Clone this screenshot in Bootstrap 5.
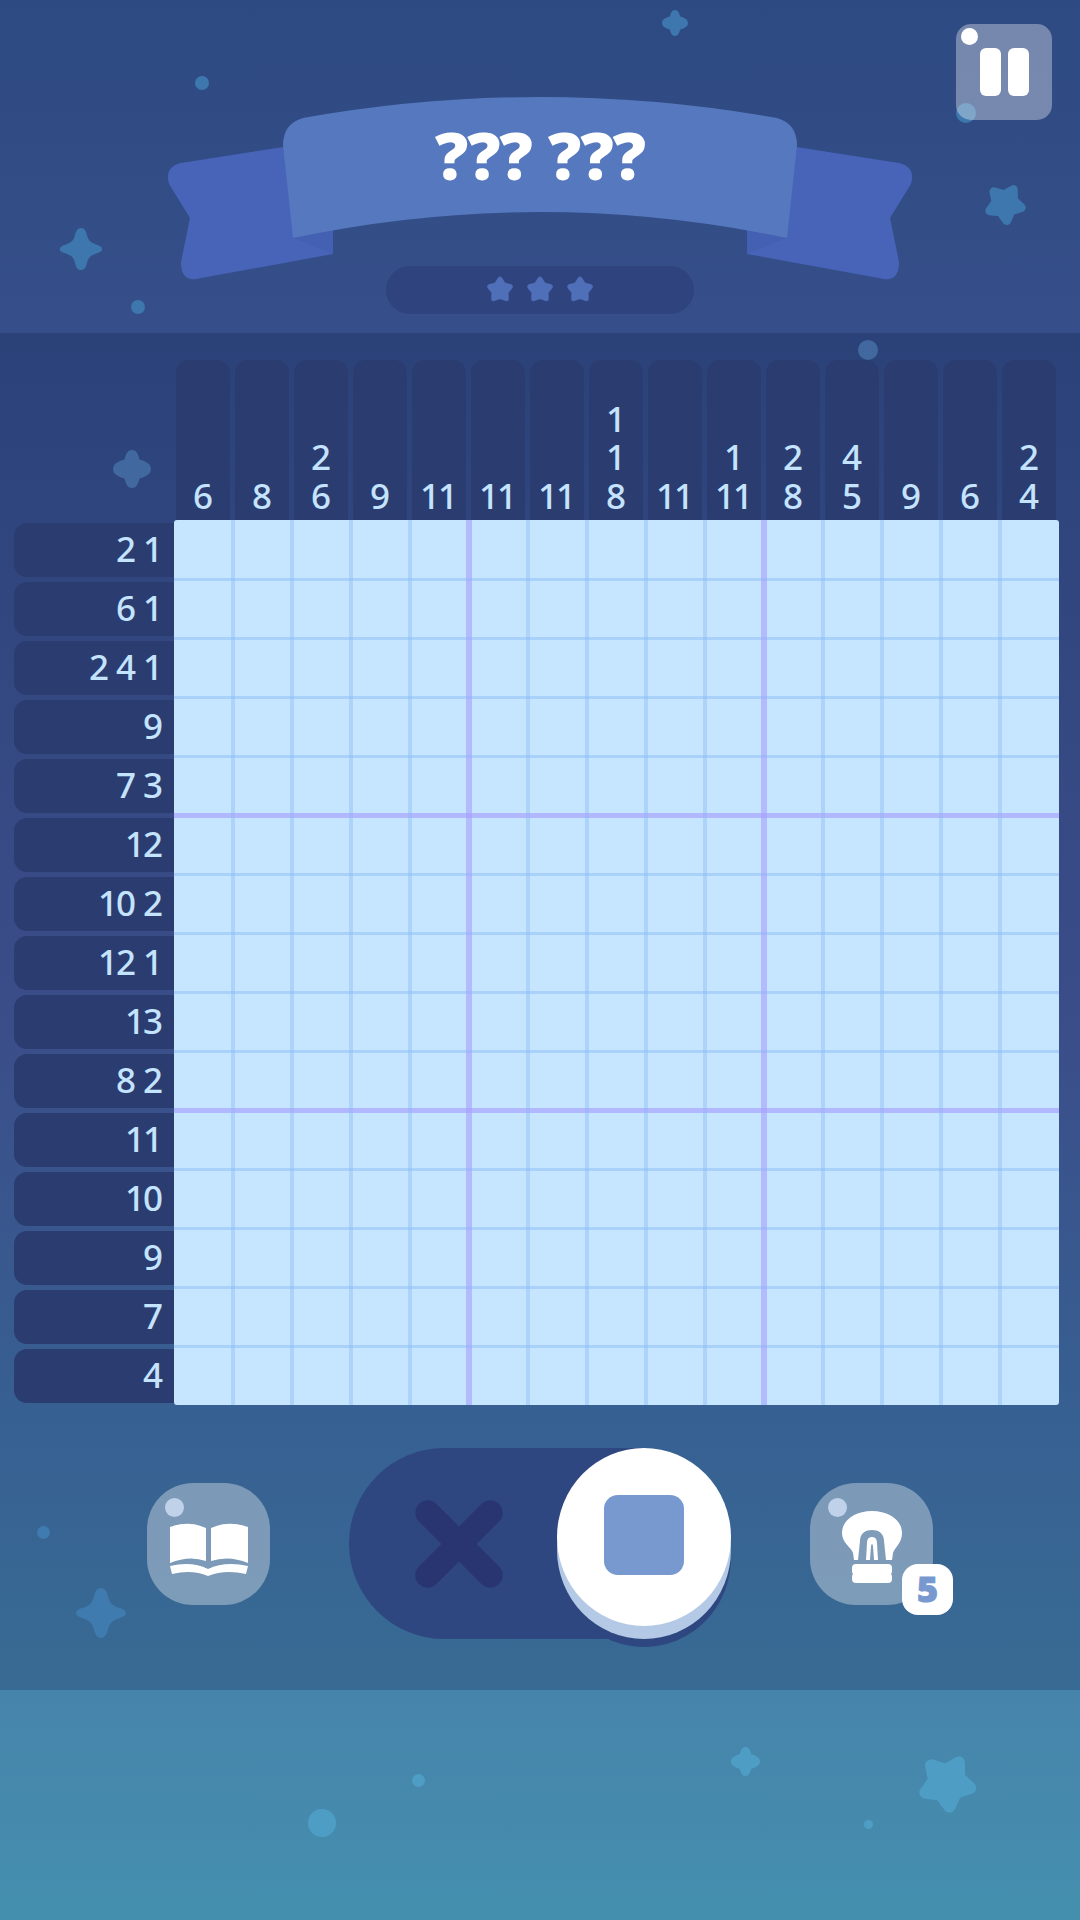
<!DOCTYPE html>
<html lang="en">
<head>
  <meta charset="UTF-8" />
  <meta name="viewport" content="width=device-width, initial-scale=1.0" />
  <title>Nonogram</title>
  <link href="https://cdn.jsdelivr.net/npm/bootstrap@5.3.0/dist/css/bootstrap.min.css" rel="stylesheet">
  <style>
    body {
      font-family: "Noto Sans", sans-serif;
      background: #2e4a82;
      width: 1080px;
      height: 1920px;
      overflow: hidden;
    }
    .deco { position: absolute; display: block; }
    .layer { position: relative; z-index: 1; }

    .top-band {
      height: 333px;
      padding-top: 90px;
      background: linear-gradient(180deg, #2e4a82 0%, #364f8a 100%);
    }
    .pause-btn {
      top: 24px;
      right: 28px;
      width: 96px;
      height: 96px;
      gap: 7px;
      border-radius: 15px;
      background: rgba(255,255,255,.34);
      z-index: 2;
    }
    .pause-btn .shine { top: 4px; left: 5px; width: 17px; height: 17px; background: #fff; }
    .pause-bar { width: 21px; height: 48px; border-radius: 6px; background: #fff; }
    .ribbon { width: 760px; height: 176px; }
    .ribbon svg { position: absolute; left: 0; top: 0; }
    .ribbon-title {
      top: 29px;
      font-size: 66px;
      line-height: 70px;
      font-weight: 900;
      color: #fff;
      letter-spacing: -1px;
    }
    .stars-pill { width: 308px; height: 48px; gap: 8px; background: #2f437f; }

    .play-area {
      height: 1357px;
      background: linear-gradient(180deg, #2b4279 0%, #3b4d89 50%, #376092 80%, #386b94 100%);
    }
    .board {
      display: grid;
      grid-template-columns: 174px 885px;
      grid-template-rows: 160px 885px;
      padding-top: 27px;
      height: 1072px;
    }
    .col-clues { display: grid; grid-template-columns: repeat(15, 59px); }
    .col-clue {
      width: 54px;
      margin-left: 2px;
      padding-bottom: 5px;
      padding-right: 2px;
      border-radius: 13px 13px 0 0;
      background: #2b3c70;
      color: #c4e3fd;
      font-size: 35px;
      line-height: 38.5px;
      font-weight: 500;
      letter-spacing: -2px;
    }
    .row-clues { display: grid; grid-template-rows: repeat(15, 59px); }
    .row-clue {
      height: 54px;
      margin: 3px 0 0 14px;
      padding-right: 13px;
      padding-bottom: 4px;
      gap: 9px;
      border-radius: 13px 0 0 13px;
      background: #2b3c70;
      color: #c4e3fd;
      font-size: 35px;
      line-height: 1;
      font-weight: 500;
      letter-spacing: -2px;
    }
    .puzzle {
      display: grid;
      grid-template-columns: repeat(15, 59px);
      grid-template-rows: repeat(15, 59px);
      background: #c6e5ff;
      border-radius: 3px;
    }
    .cell { position: relative; }
    .cell::before, .cell::after { content: ""; position: absolute; }
    .cell::before { top: 0; bottom: 0; right: -2px; width: 4px; background: rgba(135,184,242,.4); }
    .cell::after { left: 0; right: 0; bottom: -2px; height: 3px; background: rgba(135,184,242,.45); }
    .cell.thick-v::before { right: -3px; width: 6px; background: rgba(166,159,255,.6); }
    .cell.thick-h::after { bottom: -3px; height: 5px; background: rgba(166,159,255,.65); }
    .cell.last-col::before, .cell.last-row::after { display: none; }

    .controls { gap: 79px; padding-top: 43px; }
    .round-btn {
      width: 123px;
      height: 122px;
      border-radius: 46px;
      background: rgba(255,255,255,.35);
    }
    .shine { position: absolute; border-radius: 50%; }
    .round-btn .shine { top: 15px; left: 18px; width: 19px; height: 19px; background: #c0d2ea; }
    .hint-count {
      right: -20px;
      bottom: -10px;
      width: 51px;
      height: 51px;
      border-radius: 16px;
      background: #fff;
      color: #7799d0;
      font-size: 36px;
      line-height: 1;
      font-weight: 900;
      -webkit-text-stroke: 1px #7799d0;
    }
    .mode-track { width: 382px; height: 191px; background: #2e4780; }
    .mode-track svg { margin-left: 64px; }
    .mode-knob {
      top: 0;
      right: 0;
      width: 174px;
      height: 178px;
      border-radius: 50%;
      background: #fff;
      box-shadow: 0 13px 0 #b4c9e5, 0 21px 0 #2e4780;
    }
    .fill-square { width: 80px; height: 80px; border-radius: 14px; background: #7799d0; margin-top: -4px; }

    .bottom-band {
      height: 230px;
      background: linear-gradient(180deg, #4784ac 0%, #448fae 100%);
    }
  </style>
</head>
<body>
<svg width="0" height="0" class="position-absolute">
  <symbol id="spark" viewBox="0 0 100 100">
    <path d="M50 2C58 2 62 10 64 20C67 31 72 36 88 41C96 44 98 47 98 50C98 54 96 56 88 59C72 64 67 69 64 80C62 90 58 98 50 98C42 98 38 90 36 80C33 69 28 64 12 59C4 56 2 54 2 50C2 47 4 44 12 41C28 36 33 31 36 20C38 10 42 2 50 2Z"/>
  </symbol>
  <symbol id="spark-fat" viewBox="0 0 100 100">
    <path d="M50 0C63 0 66 12 70 25C80 28 100 34 100 50C100 66 80 72 70 75C66 88 63 100 50 100C37 100 34 88 30 75C20 72 0 66 0 50C0 34 20 28 30 25C34 12 37 0 50 0Z"/>
  </symbol>
  <symbol id="star" viewBox="0 0 100 100">
    <polygon points="50,16 61.8,33.8 82.3,39.5 69,56.2 70,77.5 50,70 30,77.5 31,56.2 17.7,39.5 38.2,33.8" stroke-width="15" stroke-linejoin="round"/>
  </symbol>
  <symbol id="star-tilt" viewBox="0 0 100 100">
    <polygon transform="rotate(30 50 50)" points="50,12 62.3,33 86.1,38.3 70,56.5 72.3,80.7 50,71 27.7,80.7 30,56.5 13.9,38.3 37.7,33" stroke-width="20" stroke-linejoin="round"/>
  </symbol>
</svg>

<header id="top-band" class="top-band position-relative d-flex flex-column align-items-center">
  <button type="button" class="pause-btn position-absolute border-0 p-0 d-flex justify-content-center align-items-center">
    <span class="shine"></span>
    <span class="pause-bar"></span>
    <span class="pause-bar"></span>
  </button>
  <div class="ribbon layer">
    <svg width="760" height="195" viewBox="160 90 760 195">
      <g id="tail">
        <path d="M290 146L181 163Q164 167 169 184L190 218L181 262Q181 281 196 279L333 254L333 200Z" fill="#4864b8"/>
        <path d="M293 238L333 254L333 226Z" fill="#4360b2"/>
      </g>
      <g transform="translate(1080 0) scale(-1 1)">
        <path d="M290 146L181 163Q164 167 169 184L190 218L181 262Q181 281 196 279L333 254L333 200Z" fill="#4864b8"/>
        <path d="M293 238L333 254L333 226Z" fill="#4360b2"/>
      </g>
      <path d="M283 145Q283 124 303 118Q540 76 777 118Q797 124 797 145L787 238Q540 186 293 238Z" fill="#5578be"/>
    </svg>
    <div class="ribbon-title position-absolute start-0 end-0 text-center">??? ???</div>
  </div>
  <div class="stars-pill layer rounded-pill d-flex justify-content-center align-items-center">
    <svg width="32" height="32" fill="#4f6fb9" stroke="#4f6fb9"><use href="#star"/></svg>
    <svg width="32" height="32" fill="#4f6fb9" stroke="#4f6fb9"><use href="#star"/></svg>
    <svg width="32" height="32" fill="#4f6fb9" stroke="#4f6fb9"><use href="#star"/></svg>
  </div>
</header>

<main id="play-area" class="play-area position-relative">
  <section class="board layer">
    <div></div>
    <div class="col-clues" id="col-clues"></div>
    <div class="row-clues" id="row-clues"></div>
    <div class="puzzle" id="puzzle"></div>
  </section>

  <section class="controls layer d-flex justify-content-center align-items-center">
    <button type="button" class="round-btn position-relative border-0 p-0">
      <span class="shine"></span>
      <svg class="d-block" width="122" height="122" viewBox="0 0 122 122" fill="#fff">
        <path d="M23 44Q42 37 59 45L59 78Q42 72 23 80Z"/>
        <path d="M64 45Q81 37 101 44L101 80Q82 72 64 78Z"/>
        <path d="M23 83Q45 78 61 86Q78 78 101 83L99 91Q78 86 61 93Q45 86 25 91Z"/>
      </svg>
    </button>

    <div class="mode-track position-relative rounded-pill d-flex align-items-center">
      <svg width="92" height="92" viewBox="0 0 100 100"><path d="M16 16L84 84M84 16L16 84" stroke="#293570" stroke-width="27" stroke-linecap="round"/></svg>
      <div class="mode-knob position-absolute d-flex justify-content-center align-items-center">
        <div class="fill-square"></div>
      </div>
    </div>

    <button type="button" class="round-btn position-relative border-0 p-0">
      <span class="shine"></span>
      <svg class="d-block" width="122" height="122" viewBox="0 0 122 122">
        <path d="M62 28C80 28 92 38 92 50C92 60 85 64 83 70L82 77L44 77L43 70C41 64 32 60 32 50C32 38 44 28 62 28Z" fill="#fff"/>
        <path d="M48 77L50 58C50 50 56 47 62 47C68 47 74 50 74 58L76 77Z" fill="#7f9cb8"/>
        <path d="M56 77L57 60C57 56 59 54 62 54C65 54 67 56 67 60L68 77Z" fill="#fff"/>
        <path d="M60 77L61 63Q62 59 63 63L64 77Z" fill="#7f9cb8"/>
        <rect x="42" y="81" width="40" height="11" rx="4" fill="#fff"/>
        <rect x="42" y="90" width="40" height="10" rx="4" fill="#fff"/>
      </svg>
      <span class="hint-count position-absolute d-flex justify-content-center align-items-center">5</span>
    </button>
  </section>
</main>

<footer id="bottom-band" class="bottom-band position-relative"></footer>

<script>
const colClues = [[6],[8],[2,6],[9],[11],[11],[11],[1,1,8],[11],[1,11],[2,8],[4,5],[9],[6],[2,4]];
const rowClues = [[2,1],[6,1],[2,4,1],[9],[7,3],[12],[10,2],[12,1],[13],[8,2],[11],[10],[9],[7],[4]];

const colBox = document.getElementById('col-clues');
colClues.forEach(nums => {
  const el = document.createElement('div');
  el.className = 'col-clue d-flex flex-column justify-content-end align-items-center';
  el.innerHTML = nums.map(n => `<span>${n}</span>`).join('');
  colBox.appendChild(el);
});

const rowBox = document.getElementById('row-clues');
rowClues.forEach(nums => {
  const el = document.createElement('div');
  el.className = 'row-clue d-flex justify-content-end align-items-center';
  el.innerHTML = nums.map(n => `<span>${n}</span>`).join('');
  rowBox.appendChild(el);
});

const puzzle = document.getElementById('puzzle');
for (let r = 0; r < 15; r++) {
  for (let c = 0; c < 15; c++) {
    const cell = document.createElement('div');
    cell.className = 'cell';
    if (c === 4 || c === 9) cell.classList.add('thick-v');
    if (r === 4 || r === 9) cell.classList.add('thick-h');
    if (c === 14) cell.classList.add('last-col');
    if (r === 14) cell.classList.add('last-row');
    puzzle.appendChild(cell);
  }
}

// background sparkles: [x centre, y centre, size, kind, colour], page coordinates
const decor = {
  'top-band': { top: 0, color: '#3d77ad', items: [
    [675, 23, 26, 'spark-fat'], [202, 83, 14, 'dot'], [81, 249, 44, 'spark'], [138, 307, 14, 'dot'],
    [1005, 204, 44, 'star-tilt'], [966, 113, 20, 'dot']
  ]},
  'play-area': { top: 333, color: '#41699f', items: [
    [868, 350, 20, 'dot'], [132, 469, 38, 'spark-fat'],
    [43, 1532, 13, 'dot', '#3f7bae'], [101, 1613, 52, 'spark', '#3f7bae']
  ]},
  'bottom-band': { top: 1690, color: '#4e9dc5', items: [
    [745, 1761, 29, 'spark-fat'], [947, 1783, 62, 'star-tilt'], [418, 1780, 13, 'dot'], [322, 1823, 28, 'dot'], [868, 1824, 9, 'dot']
  ]}
};

Object.keys(decor).forEach(id => {
  const group = decor[id];
  const host = document.getElementById(id);
  group.items.forEach(([x, y, size, kind, color]) => {
    const left = x - size / 2;
    const top = y - size / 2 - group.top;
    const fill = color || group.color;
    const shape = kind === 'dot'
      ? `<circle cx="50" cy="50" r="50"/>`
      : `<use href="#${kind}"/>`;
    host.insertAdjacentHTML('afterbegin',
      `<svg class="deco" width="${size}" height="${size}" viewBox="0 0 100 100" style="left:${left}px;top:${top}px" fill="${fill}" stroke="${fill}" stroke-width="0">${shape}</svg>`);
  });
});
</script>
<script src="https://cdn.jsdelivr.net/npm/bootstrap@5.3.0/dist/js/bootstrap.bundle.min.js"></script>
</body>
</html>
